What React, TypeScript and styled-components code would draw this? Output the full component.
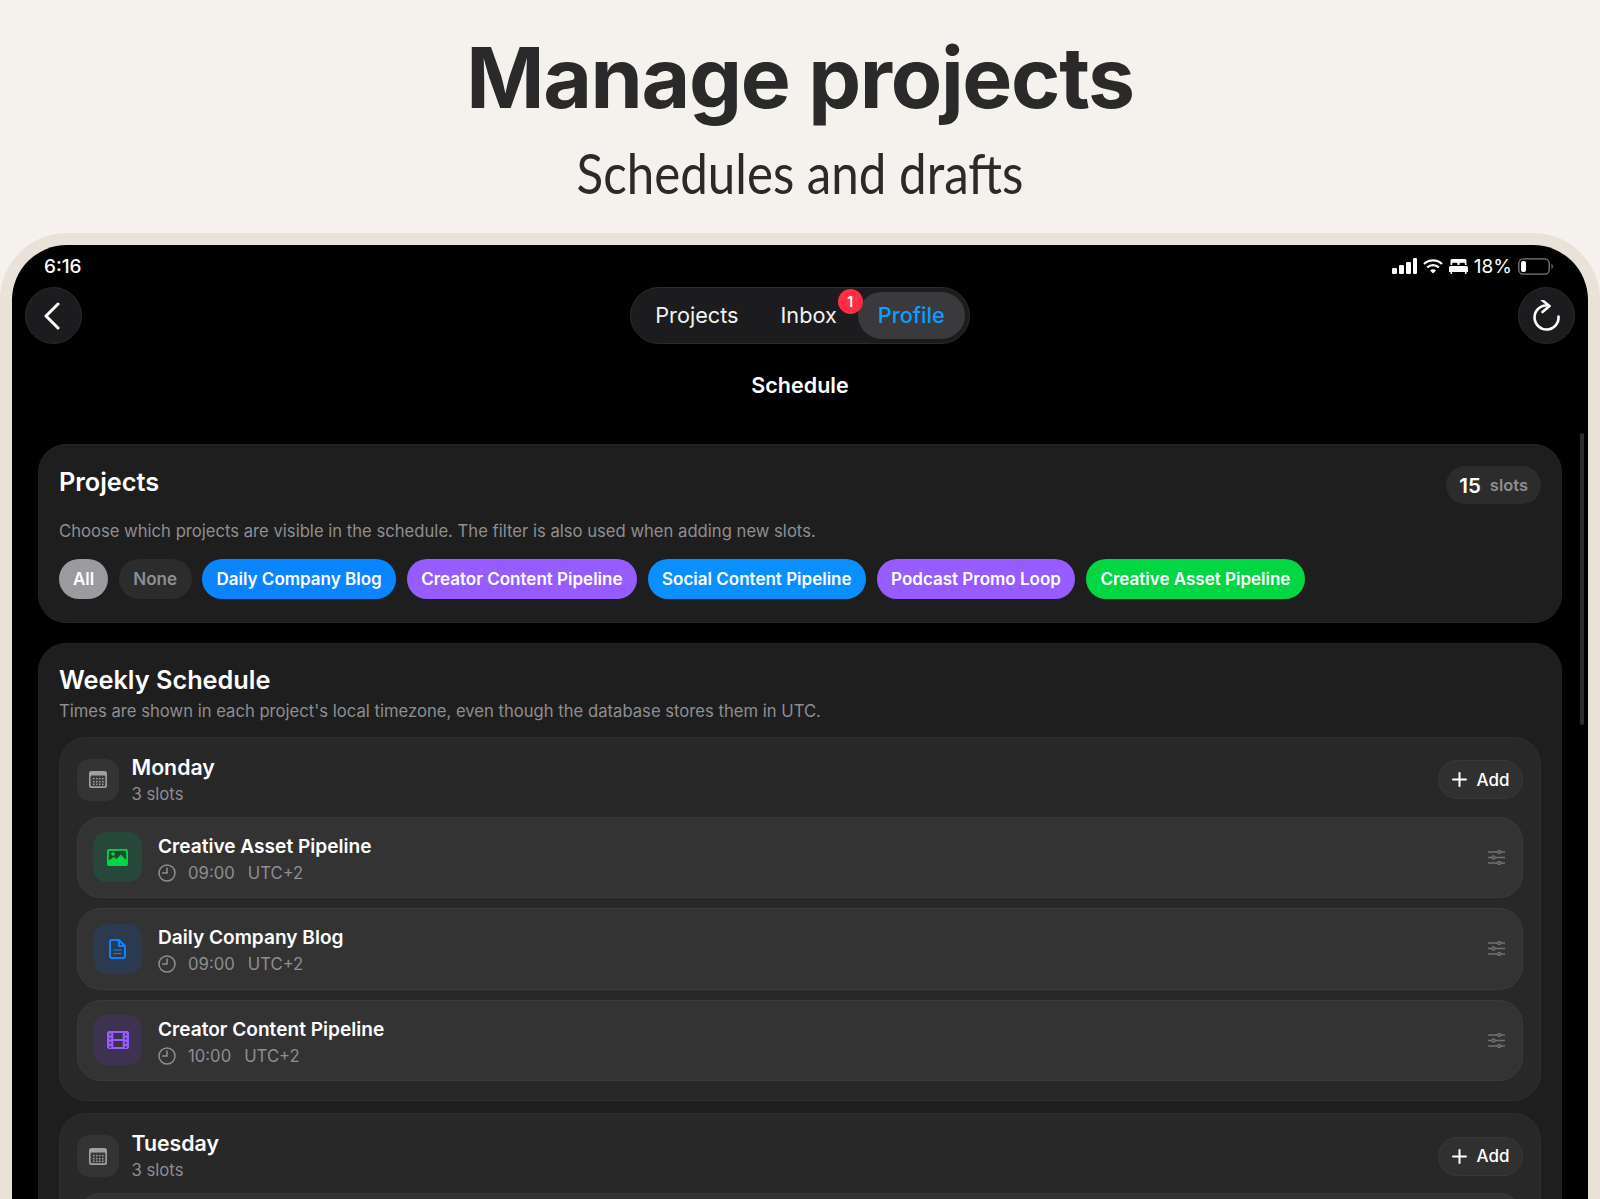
import React from "react";
import styled, { createGlobalStyle } from "styled-components";

const GlobalStyle = createGlobalStyle`
  * {
    padding: 0;
    margin: 0;
    box-sizing: border-box;
  }

  html, body {
    height: 1199px;
    overflow: hidden;
    background-color: #f5f2ee;
    font-family: Inter, "Noto Sans", sans-serif;
  }
`;

const Page = styled.div`
  width: 1600px;
  height: 1199px;
  overflow: hidden;
`;

const Hero = styled.header`
  height: 233px;
  padding-top: 36px;
  text-align: center;
  color: #2a2a2a;
`;

const HeroTitle = styled.h1`
  font-size: 84px;
  line-height: 1;
  font-weight: 700;
  letter-spacing: -1.3px;
`;

const HeroSubtitle = styled.h2`
  margin-top: 25px;
  font-family: Lato, sans-serif;
  font-size: 56px;
  line-height: 1;
  font-weight: 400;
  transform: scaleX(0.88);
`;

const Device = styled.div`
  position: relative;
  height: 966px;
  border: 12px solid #e9e2d9;
  border-bottom: none;
  border-radius: 67px 67px 0 0;
  background-color: #000;
  overflow: hidden;
`;

const ScrollThumb = styled.div`
  position: absolute;
  top: 188px;
  right: 4px;
  width: 4px;
  height: 292px;
  border-radius: 2px;
  background-color: #2c2c2e;
`;

const StatusBar = styled.div`
  height: 42px;
  padding: 0 35px 0 32px;
  display: flex;
  align-items: center;
  justify-content: space-between;
  color: #fff;
`;

const StatusTime = styled.span`
  font-size: 19px;
  font-weight: 500;
`;

const StatusIcons = styled.div`
  display: flex;
  align-items: center;
  gap: 6px;
  font-size: 19px;
`;

const NavBar = styled.nav`
  height: 57px;
  padding: 0 12.5px;
  display: flex;
  align-items: center;
  justify-content: space-between;
`;

const RoundButton = styled.button`
  width: 57px;
  height: 57px;
  border-radius: 50%;
  border: 1px solid #2a2a2c;
  background-color: #1c1c1e;
  display: flex;
  align-items: center;
  justify-content: center;
`;

const Segment = styled.div`
  height: 57px;
  padding: 3px 4px 3px 3px;
  border: 1px solid #2a2a2c;
  border-radius: 29px;
  background-color: #1c1c1e;
  display: flex;
  align-items: center;
`;

const Tab = styled.span<{ $active?: boolean }>`
  position: relative;
  height: 47px;
  padding: 0 ${(p) => (p.$active ? 20 : 21)}px 2px;
  border-radius: 24px;
  display: flex;
  align-items: center;
  font-size: 21.7px;
  font-weight: ${(p) => (p.$active ? 500 : 400)};
  color: ${(p) => (p.$active ? "#0a9fff" : "#f2f2f2")};
  background-color: ${(p) => (p.$active ? "#3a3a3c" : "transparent")};
`;

const Badge = styled.span`
  position: absolute;
  z-index: 1;
  top: -3px;
  right: -5px;
  width: 25px;
  height: 25px;
  border-radius: 50%;
  background-color: #ff2d46;
  color: #fff;
  font-size: 14px;
  font-weight: 600;
  display: flex;
  align-items: center;
  justify-content: center;
`;

const ScreenTitle = styled.div`
  height: 100px;
  padding-top: 27px;
  text-align: center;
  font-size: 21.5px;
  line-height: 28px;
  font-weight: 600;
  color: #fff;
`;

const Content = styled.main`
  padding: 0 26px;
  display: flex;
  flex-direction: column;
  gap: 19.5px;
`;

const Card = styled.section`
  padding: 20px 20px 23px;
  border-radius: 28px;
  border: 1px solid #242424;
  background-color: #1e1e1e;
`;

const ScheduleCard = styled(Card)`
  padding-top: 19px;
`;

const CardHead = styled.div`
  display: flex;
  align-items: flex-start;
  justify-content: space-between;
`;

const CardTitle = styled.h3`
  font-size: 25.3px;
  line-height: 34px;
  font-weight: 600;
  color: #fff;
`;

const SlotCount = styled.div`
  height: 38px;
  margin-top: 1px;
  padding: 0 13px 0 13px;
  border-radius: 19px;
  background-color: #2c2c2c;
  display: flex;
  align-items: center;
  gap: 9px;
  font-size: 16.5px;
  font-weight: 600;
  color: #8e8e93;
`;

const SlotCountNumber = styled.span`
  font-size: 20.5px;
  color: #fff;
`;

const Description = styled.p`
  font-size: 16.65px;
  line-height: 24px;
  color: #8e8e93;
`;

const FilterText = styled(Description)`
  margin-top: 15px;
`;

const ScheduleText = styled(Description)`
  margin-top: 2px;
`;

const Chips = styled.div`
  margin-top: 16px;
  display: flex;
  gap: 10.5px;
`;

const Chip = styled.span<{ $bg: string; $fg?: string; $pad?: number }>`
  height: 40px;
  padding: 0 ${(p) => p.$pad ?? 14.5}px;
  border-radius: 20px;
  background-color: ${(p) => p.$bg};
  color: ${(p) => p.$fg || "#fff"};
  display: flex;
  align-items: center;
  font-size: 17px;
  font-weight: 600;
`;

const Groups = styled.div`
  margin-top: 14px;
  display: flex;
  flex-direction: column;
  gap: 12.5px;
`;

const DayGroup = styled.div`
  padding: 15px 17px 18.5px;
  border-radius: 28px;
  border: 1px solid #2f2f2f;
  background-color: #282828;
`;

const DayHead = styled.div`
  margin-bottom: 10px;
  display: flex;
  align-items: center;
  gap: 12.5px;
`;

const DayIcon = styled.div`
  width: 42px;
  height: 42px;
  border-radius: 13px;
  background-color: #343434;
  display: flex;
  align-items: center;
  justify-content: center;
`;

const DayText = styled.div`
  flex: 1;
`;

const DayName = styled.div`
  font-size: 21.3px;
  line-height: 29px;
  font-weight: 600;
  color: #fff;
`;

const DayCount = styled.div`
  font-size: 16.7px;
  line-height: 25px;
  color: #8e8e93;
`;

const AddButton = styled.button`
  width: 85px;
  height: 39px;
  border-radius: 20px;
  border: 1px solid #383838;
  background-color: #303030;
  color: #fff;
  font-family: inherit;
  font-size: 17px;
  font-weight: 500;
  display: flex;
  align-items: center;
  justify-content: center;
  gap: 10px;
`;

const SlotList = styled.div`
  display: flex;
  flex-direction: column;
  gap: 10px;
`;

const SlotRow = styled.div`
  height: 81.5px;
  padding: 0 17px 0 15px;
  border-radius: 24px;
  border: 1px solid #3b3b3b;
  background-color: #333333;
  display: flex;
  align-items: center;
  gap: 16px;
`;

const SlotIcon = styled.div<{ $bg: string }>`
  width: 49px;
  height: 50px;
  border-radius: 14px;
  background-color: ${(p) => p.$bg};
  display: flex;
  align-items: center;
  justify-content: center;
`;

const SlotBody = styled.div`
  flex: 1;
  padding-top: 3.5px;
`;

const SlotName = styled.div`
  font-size: 19.1px;
  line-height: 27px;
  font-weight: 600;
  color: #fff;
`;

const SlotMeta = styled.div`
  height: 26px;
  display: flex;
  align-items: center;
  gap: 12px;
  font-size: 16.7px;
  color: #8e8e93;
`;

const SlotTime = styled.span`
  margin-right: 1px;
`;

const CalendarGlyph = () => (
  <svg width="18" height="17" viewBox="0 0 18 17">
    <rect width="18" height="17" rx="2.5" fill="#a0a0a4" />
    <rect x="1.6" y="4.4" width="14.8" height="10.8" rx="1" fill="#3c3c3e" />
    {[4, 7, 10, 13].flatMap((x) =>
      [7, 10, 12.6].map((y) => <rect key={`${x}-${y}`} x={x} y={y} width="1.5" height="1.4" fill="#a0a0a4" />)
    )}
  </svg>
);

const ClockGlyph = () => (
  <svg width="18" height="18" viewBox="0 0 18 18" fill="none" stroke="#8e8e93" strokeWidth="1.5" strokeLinecap="round">
    <circle cx="9" cy="9" r="8" />
    <path d="M9 4v5H4.6" />
  </svg>
);

const SlidersGlyph = () => (
  <svg width="17" height="15" viewBox="0 0 17 15" fill="none" stroke="#717173" strokeWidth="1.4">
    <path d="M0 2h17M0 7.5h17M0 13h17" />
    <circle cx="11.200" cy="2" r="1.500" fill="#333333" />
    <circle cx="5.500" cy="7.500" r="1.500" fill="#333333" />
    <circle cx="11.200" cy="13" r="1.500" fill="#333333" />
  </svg>
);

const ImageGlyph = () => (
  <svg width="21" height="17" viewBox="0 0 21 17">
    <rect width="21" height="17" rx="2" fill="#02d643" />
    <rect x="1.8" y="1.8" width="17.4" height="9" fill="#1f4a30" />
    <circle cx="6" cy="5" r="1.8" fill="#02d643" />
    <path d="M1.8 11.5l5-3.5 3 2 4-4.500 5.400 5.500v2H1.800z" fill="#02d643" />
  </svg>
);

const DocGlyph = () => (
  <svg width="17" height="20" viewBox="0 0 17 20" fill="none" stroke="#0a84ff" strokeWidth="2" strokeLinejoin="round">
    <path d="M3 1h7l6 6v10a2 2 0 0 1-2 2H3a2 2 0 0 1-2-2V3a2 2 0 0 1 2-2z" />
    <path d="M10 1v6h6" />
    <path d="M4.5 11h8M4.5 14.5h8" strokeWidth="1.2" />
  </svg>
);

const FilmGlyph = () => (
  <svg width="22" height="18" viewBox="0 0 22 18" fill="none">
    <rect width="22" height="18" rx="2" fill="#965cff" />
    <rect x="6.300" y="2" width="9.400" height="6" fill="#3d3350" />
    <rect x="6.300" y="10" width="9.400" height="6" fill="#3d3350" />
    {[3, 7.100, 11.300, 15.400].map((y) => (
      <g key={y} fill="#3d3350">
        <rect x="2.400" y={y - 0.400} width="1.800" height="1.800" />
        <rect x="17.800" y={y - 0.400} width="1.800" height="1.800" />
      </g>
    ))}
  </svg>
);

const PlusGlyph = () => (
  <svg width="15" height="15" viewBox="0 0 15 15" stroke="#fff" strokeWidth="2" strokeLinecap="round">
    <path d="M7.5 1v13M1 7.5h13" />
  </svg>
);

const SignalGlyph = () => (
  <svg width="25" height="16" viewBox="0 0 25 16" fill="#fff">
    <rect y="10" width="5" height="6" rx="1.2" />
    <rect x="7" y="7" width="5" height="9" rx="1.2" />
    <rect x="14" y="4" width="5" height="12" rx="1.2" />
    <rect x="21" y="0" width="4" height="16" rx="1.2" />
  </svg>
);

const WifiGlyph = () => (
  <svg width="20" height="15" viewBox="0 0 20 15" fill="none" stroke="#fff" strokeWidth="2.2">
    <path d="M1 5a13 13 0 0 1 18 0M4.2 8.4a8.5 8.5 0 0 1 11.6 0" />
    <path d="M10 14.5l-3-3a4.2 4.2 0 0 1 6 0z" fill="#fff" stroke="none" />
  </svg>
);

const BedGlyph = () => (
  <svg width="19" height="15" viewBox="0 0 19 15" fill="#fff">
    <path d="M3 0h13a1.5 1.5 0 0 1 1.5 1.5V6h-1.6V5a1.2 1.2 0 0 0-1.2-1.2h-3A1.2 1.2 0 0 0 10.500 5v1h-2V5a1.2 1.2 0 0 0-1.200-1.200h-3A1.2 1.2 0 0 0 3.100 5v1H1.500V1.500A1.500 1.500 0 0 1 3 0z" />
    <path d="M1.500 7h16A1.500 1.500 0 0 1 19 8.500V13h-1.500v2H16v-2H3v2H1.500v-2H0V8.500A1.500 1.500 0 0 1 1.500 7z" />
  </svg>
);

const BatteryGlyph = () => (
  <svg width="35" height="17" viewBox="0 0 35 17" fill="none">
    <rect x="0.800" y="0.800" width="30.400" height="15.400" rx="4.500" stroke="#7c7c80" strokeWidth="1.300" />
    <rect x="3" y="3" width="5" height="11" rx="2" fill="#fff" />
    <path d="M33.500 6v5c.8-.3 1.300-1.300 1.300-2.500S34.300 6.300 33.500 6z" fill="#7c7c80" />
  </svg>
);

const days = [
  {
    name: "Monday",
    count: "3 slots",
    slots: [
      { name: "Creative Asset Pipeline", time: "09:00", zone: "UTC+2", bg: "#27473a", icon: <ImageGlyph /> },
      { name: "Daily Company Blog", time: "09:00", zone: "UTC+2", bg: "#2b3a4e", icon: <DocGlyph /> },
      { name: "Creator Content Pipeline", time: "10:00", zone: "UTC+2", bg: "#3d3350", icon: <FilmGlyph /> },
    ],
  },
  { name: "Tuesday", count: "3 slots", slots: [] },
];

const chips = [
  { label: "Daily Company Blog", bg: "#0a84ff" },
  { label: "Creator Content Pipeline", bg: "#965cff" },
  { label: "Social Content Pipeline", bg: "#0a8fff" },
  { label: "Podcast Promo Loop", bg: "#965cff" },
  { label: "Creative Asset Pipeline", bg: "#02d643" },
];

export default function App() {
  return (
    <Page>
      <GlobalStyle />
      <Hero>
        <HeroTitle>Manage projects</HeroTitle>
        <HeroSubtitle>Schedules and drafts</HeroSubtitle>
      </Hero>
      <Device>
        <ScrollThumb />
        <StatusBar>
          <StatusTime>6:16</StatusTime>
          <StatusIcons>
            <SignalGlyph />
            <WifiGlyph />
            <BedGlyph />
            <span>18%</span>
            <BatteryGlyph />
          </StatusIcons>
        </StatusBar>
        <NavBar>
          <RoundButton aria-label="Back">
            <svg width="18" height="28" viewBox="0 0 18 28" fill="none" stroke="#fff" strokeWidth="3" strokeLinecap="round" strokeLinejoin="round">
              <path d="M14 2L2 14l12 12" />
            </svg>
          </RoundButton>
          <Segment>
            <Tab>Projects</Tab>
            <Tab>
              Inbox
              <Badge>1</Badge>
            </Tab>
            <Tab $active>Profile</Tab>
          </Segment>
          <RoundButton aria-label="Refresh">
            <svg width="30" height="32" viewBox="0 0 30 32" fill="none" stroke="#fff" strokeWidth="2.600" strokeLinecap="round" strokeLinejoin="round">
              <path d="M14 5.500a12 12 0 1 0 12.500 11" />
              <path d="M10 0l7.500 6-7 6" />
            </svg>
          </RoundButton>
        </NavBar>
        <ScreenTitle>Schedule</ScreenTitle>
        <Content>
          <Card>
            <CardHead>
              <CardTitle>Projects</CardTitle>
              <SlotCount>
                <SlotCountNumber>15</SlotCountNumber>
                slots
              </SlotCount>
            </CardHead>
            <FilterText>Choose which projects are visible in the schedule. The filter is also used when adding new slots.</FilterText>
            <Chips>
              <Chip $bg="#9a9a9f" $pad={14}>All</Chip>
              <Chip $bg="#2c2c2c" $fg="#8e8e93">None</Chip>
              {chips.map((c) => (
                <Chip key={c.label} $bg={c.bg}>{c.label}</Chip>
              ))}
            </Chips>
          </Card>
          <ScheduleCard>
            <CardTitle>Weekly Schedule</CardTitle>
            <ScheduleText>Times are shown in each project's local timezone, even though the database stores them in UTC.</ScheduleText>
            <Groups>
              {days.map((d) => (
                <DayGroup key={d.name}>
                  <DayHead>
                    <DayIcon>
                      <CalendarGlyph />
                    </DayIcon>
                    <DayText>
                      <DayName>{d.name}</DayName>
                      <DayCount>{d.count}</DayCount>
                    </DayText>
                    <AddButton>
                      <PlusGlyph />
                      Add
                    </AddButton>
                  </DayHead>
                  <SlotList>
                    {d.slots.length === 0 && <SlotRow />}
                    {d.slots.map((s) => (
                      <SlotRow key={s.name}>
                        <SlotIcon $bg={s.bg}>{s.icon}</SlotIcon>
                        <SlotBody>
                          <SlotName>{s.name}</SlotName>
                          <SlotMeta>
                            <ClockGlyph />
                            <SlotTime>{s.time}</SlotTime>
                            <span>{s.zone}</span>
                          </SlotMeta>
                        </SlotBody>
                        <SlidersGlyph />
                      </SlotRow>
                    ))}
                  </SlotList>
                </DayGroup>
              ))}
            </Groups>
          </ScheduleCard>
        </Content>
      </Device>
    </Page>
  );
}
